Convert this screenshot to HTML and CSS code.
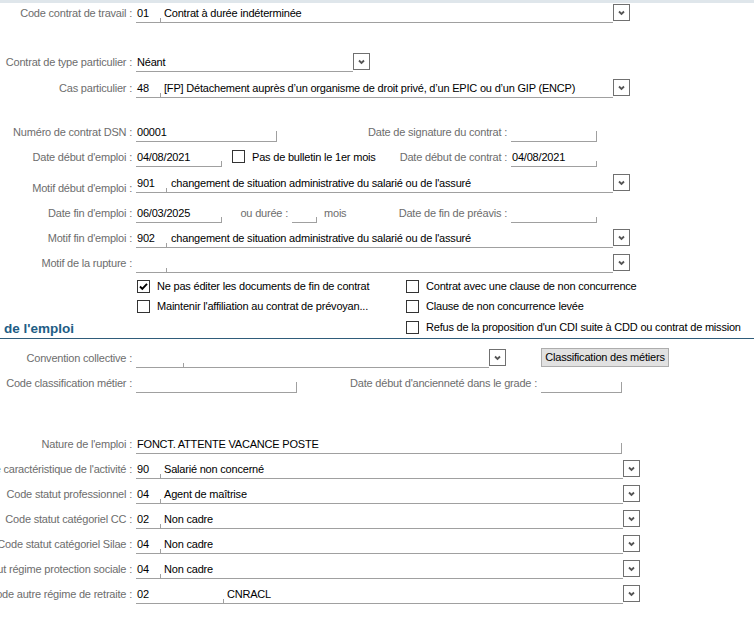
FILE: index.html
```html
<!DOCTYPE html>
<html lang="fr">
<head>
<meta charset="utf-8">
<title>Contrat</title>
<link rel="stylesheet" href="styles.css">
</head>
<body>
<div class="band"></div>
<div class="form">

  <div class="row r1">
    <div class="lbl">Code contrat de travail :</div>
    <div class="field w477"><span class="code c2">01</span><span class="val">Contrat à durée indéterminée</span></div>
    <div class="dd"><svg width="15" height="15" viewBox="0 0 15 15"><path d="M5 6.5 L7.5 9 L10 6.5" fill="none" stroke="#555" stroke-width="1.8"/></svg></div>
  </div>

  <div class="row r2">
    <div class="lbl">Contrat de type particulier :</div>
    <div class="field w217"><span class="txt">Néant</span></div>
    <div class="dd"><svg width="15" height="15" viewBox="0 0 15 15"><path d="M5 6.5 L7.5 9 L10 6.5" fill="none" stroke="#555" stroke-width="1.8"/></svg></div>
  </div>

  <div class="row r3">
    <div class="lbl">Cas particulier :</div>
    <div class="field w477"><span class="code c2">48</span><span class="val">[FP] Détachement auprès d’un organisme de droit privé, d’un EPIC ou d’un GIP (ENCP)</span></div>
    <div class="dd"><svg width="15" height="15" viewBox="0 0 15 15"><path d="M5 6.5 L7.5 9 L10 6.5" fill="none" stroke="#555" stroke-width="1.8"/></svg></div>
  </div>

  <div class="row r4">
    <div class="lpart">
      <div class="lbl">Numéro de contrat DSN :</div>
      <div class="field w141 tall"><span class="txt">00001</span></div>
    </div>
    <div class="rlbl w140">Date de signature du contrat :</div>
    <div class="field w86 tall"></div>
  </div>

  <div class="row r5">
    <div class="lpart">
      <div class="lbl">Date début d'emploi :</div>
      <div class="field w86 tick"><span class="txt">04/08/2021</span></div>
      <span class="cb cb-inline"></span>
      <span class="cbtext">Pas de bulletin le 1er mois</span>
    </div>
    <div class="rlbl w140">Date début de contrat :</div>
    <div class="field w86 tick"><span class="txt">04/08/2021</span></div>
  </div>

  <div class="row r6">
    <div class="lbl low">Motif début d'emploi :</div>
    <div class="field w477"><span class="code c3">901</span><span class="val v3">changement de situation administrative du salarié ou de l'assuré</span></div>
    <div class="dd"><svg width="15" height="15" viewBox="0 0 15 15"><path d="M5 6.5 L7.5 9 L10 6.5" fill="none" stroke="#555" stroke-width="1.8"/></svg></div>
  </div>

  <div class="row r7">
    <div class="lpart">
      <div class="lbl">Date fin d'emploi :</div>
      <div class="field w86 tick"><span class="txt">06/03/2025</span></div>
      <div class="rlbl w70">ou durée :</div>
      <div class="field w25 tick"></div>
      <span class="unit">mois</span>
    </div>
    <div class="rlbl w140">Date de fin de préavis :</div>
    <div class="field w86 tick"></div>
  </div>

  <div class="row r8">
    <div class="lbl">Motif fin d'emploi :</div>
    <div class="field w477"><span class="code c3">902</span><span class="val v3">changement de situation administrative du salarié ou de l'assuré</span></div>
    <div class="dd"><svg width="15" height="15" viewBox="0 0 15 15"><path d="M5 6.5 L7.5 9 L10 6.5" fill="none" stroke="#555" stroke-width="1.8"/></svg></div>
  </div>

  <div class="row r9">
    <div class="lbl">Motif de la rupture :</div>
    <div class="field w477"><span class="code c3"></span><span class="val v3"></span></div>
    <div class="dd"><svg width="15" height="15" viewBox="0 0 15 15"><path d="M5 6.5 L7.5 9 L10 6.5" fill="none" stroke="#555" stroke-width="1.8"/></svg></div>
  </div>

  <div class="checks">
    <div class="crow">
      <div class="cleft">
        <span class="cb checked"><svg width="11" height="11" viewBox="0 0 11 11"><path d="M2 5.5 L4.3 7.8 L9 2.8" fill="none" stroke="#000" stroke-width="1.9"/></svg></span>
        <span class="cbtext">Ne pas éditer les documents de fin de contrat</span>
      </div>
      <div class="cright">
        <span class="cb"></span>
        <span class="cbtext">Contrat avec une clause de non concurrence</span>
      </div>
    </div>
    <div class="crow">
      <div class="cleft">
        <span class="cb"></span>
        <span class="cbtext">Maintenir l'affiliation au contrat de prévoyan...</span>
      </div>
      <div class="cright">
        <span class="cb"></span>
        <span class="cbtext">Clause de non concurrence levée</span>
      </div>
    </div>
    <div class="crow crow-last">
      <div class="cleft head">
        <h2 class="section">de l'emploi</h2>
      </div>
      <div class="cright">
        <span class="cb"></span>
        <span class="cbtext">Refus de la proposition d'un CDI suite à CDD ou contrat de mission</span>
      </div>
    </div>
  </div>

  <div class="row r13">
    <div class="lbl">Convention collective :</div>
    <div class="field w353"><span class="code c48"></span><span class="val"></span></div>
    <div class="dd"><svg width="15" height="15" viewBox="0 0 15 15"><path d="M5 6.5 L7.5 9 L10 6.5" fill="none" stroke="#555" stroke-width="1.8"/></svg></div>
    <button class="btn" type="button">Classification des métiers</button>
  </div>

  <div class="row r14">
    <div class="lpart">
      <div class="lbl">Code classification métier :</div>
      <div class="field w161 tall"></div>
    </div>
    <div class="rlbl w170">Date début d'ancienneté dans le grade :</div>
    <div class="field w81 tall"></div>
  </div>

  <div class="row r15">
    <div class="lbl">Nature de l'emploi :</div>
    <div class="field w486 tall"><span class="txt">FONCT. ATTENTE VACANCE POSTE</span></div>
  </div>

  <div class="row">
    <div class="lbl">Code caractéristique de l'activité :</div>
    <div class="field w487"><span class="code c2">90</span><span class="val">Salarié non concerné</span></div>
    <div class="dd"><svg width="15" height="15" viewBox="0 0 15 15"><path d="M5 6.5 L7.5 9 L10 6.5" fill="none" stroke="#555" stroke-width="1.8"/></svg></div>
  </div>

  <div class="row">
    <div class="lbl">Code statut professionnel :</div>
    <div class="field w487"><span class="code c2">04</span><span class="val">Agent de maîtrise</span></div>
    <div class="dd"><svg width="15" height="15" viewBox="0 0 15 15"><path d="M5 6.5 L7.5 9 L10 6.5" fill="none" stroke="#555" stroke-width="1.8"/></svg></div>
  </div>

  <div class="row">
    <div class="lbl">Code statut catégoriel CC :</div>
    <div class="field w487"><span class="code c2">02</span><span class="val">Non cadre</span></div>
    <div class="dd"><svg width="15" height="15" viewBox="0 0 15 15"><path d="M5 6.5 L7.5 9 L10 6.5" fill="none" stroke="#555" stroke-width="1.8"/></svg></div>
  </div>

  <div class="row">
    <div class="lbl">Code statut catégoriel Silae :</div>
    <div class="field w487"><span class="code c2">04</span><span class="val">Non cadre</span></div>
    <div class="dd"><svg width="15" height="15" viewBox="0 0 15 15"><path d="M5 6.5 L7.5 9 L10 6.5" fill="none" stroke="#555" stroke-width="1.8"/></svg></div>
  </div>

  <div class="row">
    <div class="lbl">Code statut régime protection sociale :</div>
    <div class="field w487"><span class="code c2">04</span><span class="val">Non cadre</span></div>
    <div class="dd"><svg width="15" height="15" viewBox="0 0 15 15"><path d="M5 6.5 L7.5 9 L10 6.5" fill="none" stroke="#555" stroke-width="1.8"/></svg></div>
  </div>

  <div class="row">
    <div class="lbl">Code autre régime de retraite :</div>
    <div class="field w487"><span class="code c88">02</span><span class="val">CNRACL</span></div>
    <div class="dd"><svg width="15" height="15" viewBox="0 0 15 15"><path d="M5 6.5 L7.5 9 L10 6.5" fill="none" stroke="#555" stroke-width="1.8"/></svg></div>
  </div>

</div>
</body>
</html>
```

FILE: styles.css
```css
html, body {
  margin: 0;
  padding: 0;
  background: #fff;
}
body {
  width: 754px;
  height: 639px;
  overflow: hidden;
  font-family: "Liberation Sans", Arial, sans-serif;
  font-size: 11px;
  letter-spacing: -0.2px;
  color: #000;
}
.band {
  height: 3px;
  background: #dfe6eb;
}
.form {
  padding-top: 1px;
}
.row {
  display: flex;
  align-items: flex-start;
  height: 25px;
}
.r2 { margin-top: 24px; }
.r3 { margin-top: 1px; }
.r4 { margin-top: 19px; }
.r6 { margin-top: 1px; }
.r7 { margin-top: 5px; }
.r13 { margin-top: 10px; }
.r15 { margin-top: 36px; }

.lpart {
  flex: none;
  width: 371px;
  display: flex;
  align-items: flex-start;
}
.lbl {
  flex: none;
  width: 136px;
  box-sizing: border-box;
  padding-right: 4px;
  display: flex;
  justify-content: flex-end;
  white-space: nowrap;
  line-height: 18px;
  color: #6d6d6d;
}
.lbl.low { padding-top: 5px; }
.rlbl {
  flex: none;
  box-sizing: border-box;
  padding-right: 4px;
  display: flex;
  justify-content: flex-end;
  white-space: nowrap;
  line-height: 18px;
  color: #6d6d6d;
}
.w70 { width: 70px; }
.w140 { width: 140px; }
.w170 { width: 170px; }

.field {
  flex: none;
  display: flex;
  height: 18px;
  line-height: 18px;
  border-bottom: 1px solid #a0a0a0;
  white-space: nowrap;
  overflow: hidden;
  box-sizing: content-box;
}
.field.tick {
  background: linear-gradient(#a0a0a0, #a0a0a0) right bottom / 1px 5px no-repeat;
}
.field.tall {
  background: linear-gradient(#a0a0a0, #a0a0a0) right bottom / 1px 10px no-repeat;
}
.w25 { width: 25px; }
.w81 { width: 81px; }
.w86 { width: 86px; }
.w141 { width: 141px; }
.w161 { width: 161px; }
.w217 { width: 217px; }
.w353 { width: 353px; }
.w477 { width: 477px; }
.w486 { width: 486px; }
.w487 { width: 487px; }

.txt { padding-left: 1px; }
.code {
  flex: none;
  box-sizing: border-box;
  padding-left: 1px;
  background: linear-gradient(#a0a0a0, #a0a0a0) right bottom / 1px 4px no-repeat;
}
.c2 { width: 25px; }
.c3 { width: 31px; }
.c48 { width: 48px; }
.c88 { width: 88px; }
.val { padding-left: 3px; }
.val.v3 { padding-left: 4px; }

.dd {
  flex: none;
  width: 17px;
  height: 17px;
  box-sizing: border-box;
  border: 1px solid #707070;
  background: #fff;
  display: flex;
  align-items: center;
  justify-content: center;
}
.dd svg { display: block; }

.cb {
  flex: none;
  width: 13px;
  height: 13px;
  box-sizing: border-box;
  border: 1px solid #333;
  background: #fff;
  display: flex;
  align-items: center;
  justify-content: center;
}
.cb svg { display: block; }
.cb-inline {
  margin-left: 10px;
  margin-top: 2px;
}
.cbtext {
  white-space: nowrap;
  line-height: 18px;
}
.cb-inline + .cbtext { margin-left: 7px; }
.unit {
  margin-left: 7px;
  line-height: 18px;
  color: #6d6d6d;
}

.checks {
  margin-top: -3px;
  border-bottom: 1px solid #2f5c7a;
}
.crow {
  display: flex;
  align-items: center;
  height: 20px;
}
.crow-last { height: 22px; }
.cleft {
  flex: none;
  width: 406px;
  box-sizing: border-box;
  padding-left: 137px;
  display: flex;
  align-items: center;
  gap: 7px;
}
.cleft.head {
  padding-left: 4px;
  align-self: stretch;
  align-items: flex-end;
}
.cright {
  display: flex;
  align-items: center;
  gap: 7px;
}
.section {
  margin: 0;
  font-size: 13.5px;
  font-weight: bold;
  letter-spacing: 0;
  line-height: 18px;
  color: #215d85;
}

.btn {
  flex: none;
  margin-left: 35px;
  margin-top: -1px;
  width: 128px;
  height: 19px;
  padding: 0;
  border: 1px solid #adadad;
  background: #e1e1e1;
  font-family: "Liberation Sans", Arial, sans-serif;
  font-size: 11px;
  letter-spacing: -0.2px;
  color: #000;
  line-height: 17px;
}
```
